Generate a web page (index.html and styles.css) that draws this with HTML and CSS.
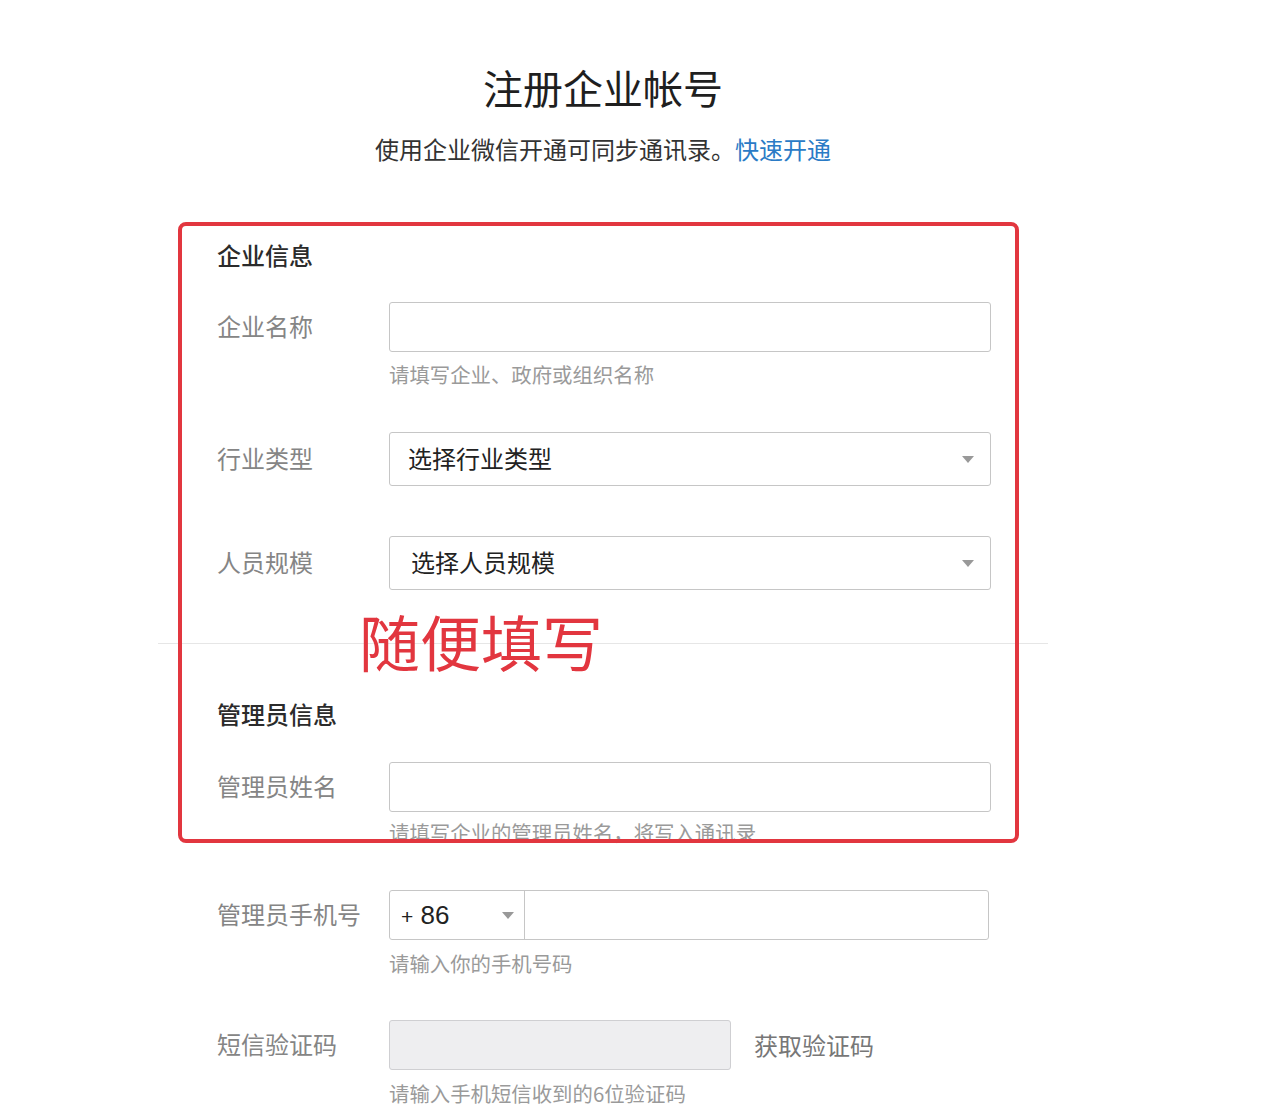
FILE: index.html
```html
<!DOCTYPE html>
<html lang="zh-CN">
<head>
<meta charset="utf-8">
<title>注册企业帐号</title>
<link rel="stylesheet" href="styles.css">
</head>
<body>
<div class="page">
  <h1 class="title">注册企业帐号</h1>
  <p class="subtitle">使用企业微信开通可同步通讯录。<a class="link" href="#">快速开通</a></p>

  <section class="section first">
    <h2 class="section-title">企业信息</h2>
    <div class="field">
      <div class="row">
        <label class="label">企业名称</label>
        <div class="input"></div>
      </div>
      <div class="help">请填写企业、政府或组织名称</div>
    </div>
    <div class="field gap-44">
      <div class="row">
        <label class="label">行业类型</label>
        <div class="select"><span class="select-text">选择行业类型</span><span class="arrow"></span></div>
      </div>
    </div>
    <div class="field gap-50">
      <div class="row">
        <label class="label">人员规模</label>
        <div class="select"><span class="select-text alt">选择人员规模</span><span class="arrow"></span></div>
      </div>
    </div>
  </section>

  <hr class="divider">

  <section class="section second">
    <h2 class="section-title">管理员信息</h2>
    <div class="field">
      <div class="row">
        <label class="label">管理员姓名</label>
        <div class="input"></div>
      </div>
      <div class="help tight">请填写企业的管理员姓名，将写入通讯录</div>
    </div>
    <div class="field gap-44">
      <div class="row">
        <label class="label">管理员手机号</label>
        <div class="phone">
          <div class="prefix"><span class="code"><span class="plus">+</span> 86</span><span class="arrow"></span></div>
          <div class="phone-input"></div>
        </div>
      </div>
      <div class="help loose">请输入你的手机号码</div>
    </div>
    <div class="field gap-43">
      <div class="row">
        <label class="label">短信验证码</label>
        <div class="sms-input"></div>
        <span class="get-code">获取验证码</span>
      </div>
      <div class="help loose">请输入手机短信收到的6位验证码</div>
    </div>
  </section>

  <div class="mark-box"></div>
  <div class="mark-text">随便填写</div>
</div>
</body>
</html>
```

FILE: styles.css
```css
* { box-sizing: border-box; }

html, body {
  margin: 0;
  padding: 0;
  background: #fff;
}

body {
  font-family: "Noto Sans CJK SC", "Noto Sans", sans-serif;
  color: #333;
}

.page {
  position: relative;
  width: 890px;
  margin-left: 158px;
  padding-top: 59px;
  padding-bottom: 40px;
}

.title {
  margin: 0;
  text-align: center;
  font-size: 40px;
  line-height: 56px;
  font-weight: 400;
  color: #1f1f1f;
}

.subtitle {
  margin: 17px 0 0;
  text-align: center;
  font-size: 24px;
  line-height: 34px;
  color: #333;
}

.link {
  color: #2a7bc6;
  text-decoration: none;
}

.section {
  padding-left: 59px;
}

.section.first { margin-top: 72px; }
.section.second { margin-top: 53px; }

.section-title {
  margin: 0 0 30px;
  font-size: 24px;
  line-height: 34px;
  font-weight: 500;
  color: #2b2b2b;
}

.section.second .section-title { margin-bottom: 31px; }

.row {
  display: flex;
  align-items: center;
}

.label {
  width: 172px;
  flex: none;
  font-size: 24px;
  line-height: 34px;
  color: #858585;
  position: relative;
  top: -1px;
}

.input {
  width: 602px;
  height: 50px;
  border: 1px solid #c6c6c6;
  border-radius: 3px;
  background: #fff;
}

.select {
  width: 602px;
  height: 54px;
  border: 1px solid #c6c6c6;
  border-radius: 3px;
  background: #fff;
  display: flex;
  align-items: center;
  justify-content: space-between;
  padding: 0 16px 0 18px;
}

.select-text {
  font-size: 24px;
  line-height: 34px;
  color: #222;
  position: relative;
  top: -1px;
}

.select-text.alt { margin-left: 3px; }

.arrow {
  width: 0;
  height: 0;
  border-left: 6px solid transparent;
  border-right: 6px solid transparent;
  border-top: 7px solid #999;
}

.help {
  margin-top: 8px;
  padding-left: 172px;
  font-size: 20.4px;
  line-height: 28px;
  color: #9a9a9a;
}

.help.tight { margin-top: 6px; }
.help.loose { margin-top: 9px; }

.gap-44 { margin-top: 44px; }
.gap-50 { margin-top: 50px; }
.gap-43 { margin-top: 43px; }

.divider {
  margin: 53px 0 0;
  border: 0;
  height: 1px;
  background: #e6e6e6;
}

.phone {
  width: 600px;
  height: 50px;
  display: flex;
  border: 1px solid #c6c6c6;
  border-radius: 3px;
  background: #fff;
}

.prefix {
  width: 135px;
  flex: none;
  display: flex;
  align-items: center;
  justify-content: space-between;
  padding: 0 10px 0 11px;
  border-right: 1px solid #c6c6c6;
}

.code {
  font-family: "Liberation Sans", Arial, sans-serif;
  font-size: 26px;
  color: #222;
}

.plus {
  font-size: 21px;
}

.phone-input { flex: 1; }

.sms-input {
  width: 342px;
  height: 50px;
  border: 1px solid #cfcfd2;
  border-radius: 3px;
  background: #eeeef0;
}

.get-code {
  margin-left: 23px;
  font-size: 24px;
  line-height: 34px;
  color: #777;
}

.mark-box {
  position: absolute;
  left: 20px;
  top: 222px;
  width: 841px;
  height: 621px;
  border: 4px solid #e2363f;
  border-radius: 8px;
  pointer-events: none;
}

.mark-text {
  position: absolute;
  left: 201px;
  top: 608px;
  font-size: 61px;
  line-height: 66px;
  color: #e2363f;
  white-space: nowrap;
}
```
